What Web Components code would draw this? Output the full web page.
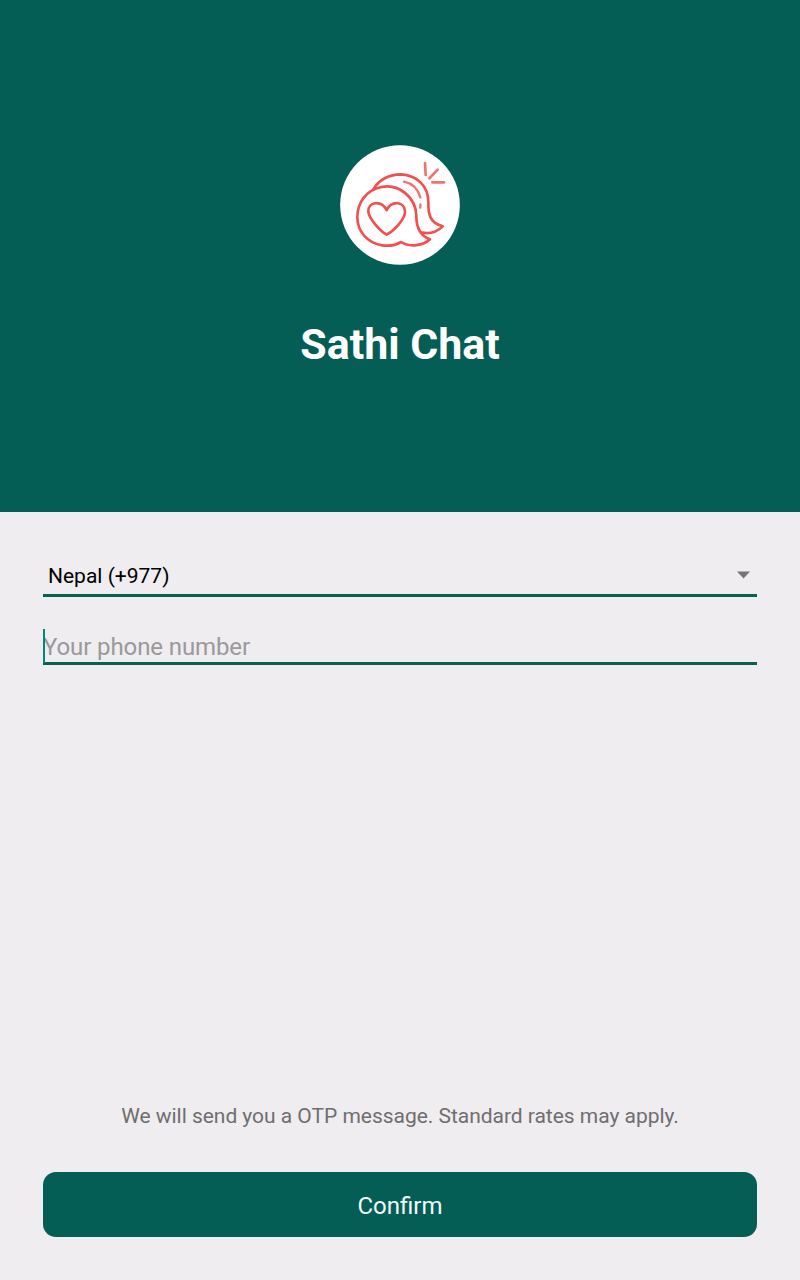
<!DOCTYPE html>
<html lang="en">
<head>
<meta charset="utf-8">
<title>Sathi Chat</title>
<style>
html, body { margin: 0; height: 100%; }
body { font-family: Roboto, sans-serif; background: #efedef; }
</style>
</head>
<body>
<sign-in-page>
  <brand-header slot="header">Sathi Chat</brand-header>
  <country-select>Nepal (+977)</country-select>
  <phone-field>Your phone number</phone-field>
  <hint-text slot="footer">We will send you a OTP message. Standard rates may apply.</hint-text>
  <confirm-button slot="footer">Confirm</confirm-button>
</sign-in-page>
<script>
function define(name, markup) {
  const template = document.createElement('template');
  template.innerHTML = markup;
  customElements.define(name, class extends HTMLElement {
    constructor() {
      super();
      this.attachShadow({ mode: 'open' }).append(template.content.cloneNode(true));
    }
  });
}

define('app-logo', `
<style>
:host { display: block; width: 120px; height: 120px; }
svg { display: block; width: 100%; height: 100%; }
</style>
<svg viewBox="30 30 360 360" fill="none" stroke="#f2504e" stroke-width="8" stroke-linecap="round" stroke-linejoin="round">
  <circle cx="210" cy="210" r="179.5" fill="#fff" stroke="none"/>
  <path d="M213 321C196 331 177 334 157 331C113 325 82 290 82 246C82 202 110 165 154 156C209 146 258 188 259 243C259 274 269 302 300 313C280 332 239 338 213 321Z"/>
  <path d="M130 163C146 134 178 118 213 118C260 120 295 153 295 201C295 238 298 263 338 274C321 291 298 297 276 293"/>
  <path d="M170 299C151 288 117 252 115 230C113 201 153 193 170 225C187 193 225 201 225 231C224 254 191 288 170 299Z"/>
  <path d="M222 140C246 145 264 163 271 187M271 208V218" stroke-width="7" stroke="#f4706d"/>
  <path d="M285 84L287 120M323 104L298 130M307 142H342" stroke-width="8" stroke="#f4706d"/>
</svg>`);

define('brand-header', `
<style>
:host { display: flex; flex-direction: column; align-items: center; box-sizing: border-box; height: 512px; padding-top: 145px; background: #055e55; color: #fff; }
h1 { margin: 54px 0 0; font-size: 42.9px; line-height: 50px; font-weight: 700; white-space: nowrap; }
</style>
<app-logo></app-logo><h1><slot></slot></h1>`);

define('country-select', `
<style>
:host { display: flex; align-items: center; justify-content: space-between; box-sizing: border-box; height: 43px; padding: 0 7px 0 5px; border-bottom: 3px solid #0a5f52; font-size: 21px; line-height: 26px; color: #000; }
svg { display: block; width: 13px; height: 8px; margin-top: 2px; }
.label { padding-top: 3px; }
</style>
<span class="label"><slot></slot></span>
<svg viewBox="0 0 13 8"><path d="M0 .5H13L6.5 7.5Z" fill="#757476"/></svg>`);

define('phone-field', `
<style>
:host { display: block; box-sizing: border-box; height: 36px; margin-top: 32px; border-bottom: 3px solid #0a5f52; color: #9a999b; font-size: 24px; line-height: 36px; letter-spacing: -.11px; position: relative; }
.caret { position: absolute; left: 0; top: 0; width: 2px; height: 34px; background: #078479; }
</style>
<slot></slot><span class="caret"></span>`);

define('hint-text', `
<style>
:host { display: block; text-align: center; font-size: 21px; line-height: 26px; letter-spacing: -.03px; color: #6f6e70; white-space: nowrap; }
</style><slot></slot>`);

define('confirm-button', `
<style>
:host { display: block; margin-top: 43px; }
button { display: block; width: 100%; height: 65px; padding: 2px 0 0; border: 0; border-radius: 13px; background: #055e55; color: #f1faf8; font: 400 24px/30px Roboto, sans-serif; }
</style><button><slot></slot></button>`);

define('sign-in-page', `
<style>
:host { display: flex; flex-direction: column; height: 1280px; background: #efedef; }
main { flex: 1; padding: 42px 43px 0; }
footer { padding: 0 43px 43px; }
</style>
<slot name="header"></slot><main><slot></slot></main><footer><slot name="footer"></slot></footer>`);
</script>
</body>
</html>
